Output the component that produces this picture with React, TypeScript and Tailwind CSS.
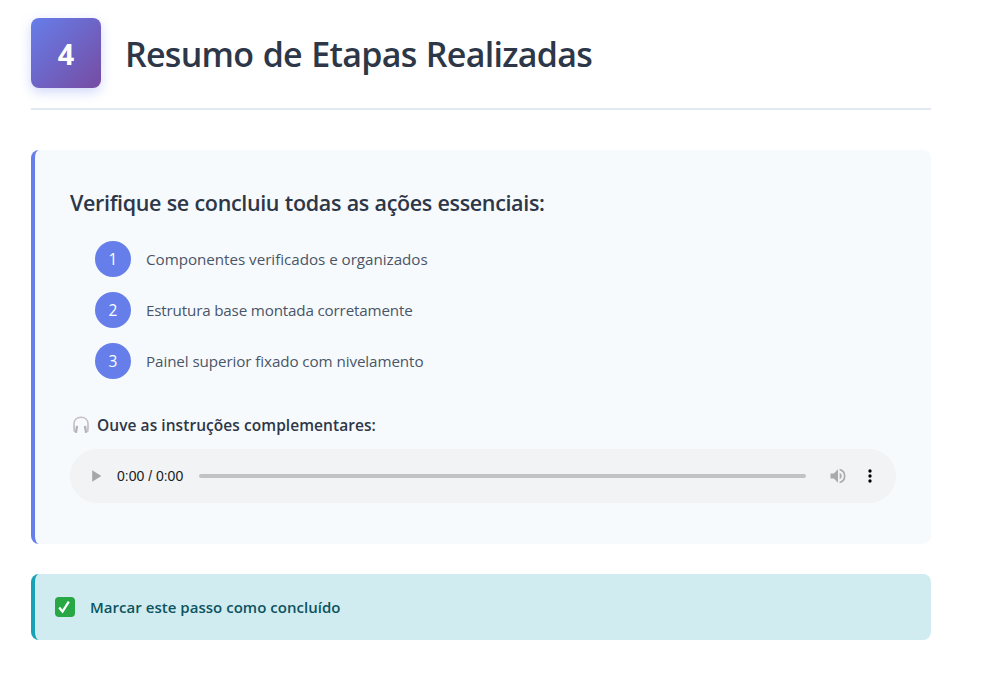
const steps = [
  { text: 'Componentes verificados e organizados', spacing: 'tracking-[-0.03px]' },
  { text: 'Estrutura base montada corretamente', spacing: 'tracking-[-0.17px]' },
  { text: 'Painel superior fixado com nivelamento', spacing: 'tracking-[-0.09px]' },
];

function Headphones() {
  return (
    <svg width="18" height="18" viewBox="0 0 18 18" fill="none">
      <path d="M2 12.5V7.7C2 3.8 4.8 1.2 9 1.2s7 2.6 7 6.5v4.8" stroke="#c5bfc8" strokeWidth="1.6" />
      <path d="M1.2 9.5v4.7c0 1 .8 2 2 2.2V9.2c-.8-.3-1.6-.3-2 .3ZM16.8 9.5v4.7c0 1-.8 2-2 2.2V9.2c.8-.3 1.6-.3 2 .3Z" fill="#c9c5cd" />
      <path d="M5 10.8 4 16M13 10.8l1 5.2" stroke="#b5afba" strokeWidth="2.2" strokeLinecap="round" />
    </svg>
  );
}

function AudioPlayer() {
  return (
    <div className="flex h-[54px] w-[826px] items-center rounded-full bg-[#f1f3f4]">
      <svg className="ml-[17px]" width="20" height="20" viewBox="0 0 24 24" fill="#a5a6a7">
        <path d="M6.2 5v14l11-7z" />
      </svg>
      <span className="ml-[10px] w-[82px] whitespace-nowrap font-['Liberation_Sans',Arial,sans-serif] text-[14px] leading-5 text-[#202124]">
        0:00 / 0:00
      </span>
      <div className="h-1 w-[607px] rounded-full bg-[#c1c2c3]" />
      <svg className="ml-[22px]" width="20" height="20" viewBox="0 0 24 24" fill="#a9aaab">
        <path d="M3 9v6h4l5 5V4L7 9H3zm13.5 3A4.5 4.5 0 0 0 14 7.97v8.05A4.5 4.5 0 0 0 16.5 12zM14 3.23v2.06a7 7 0 0 1 0 13.42v2.06a9 9 0 0 0 0-17.54z" />
      </svg>
      <svg className="ml-3" width="20" height="20" viewBox="0 0 24 24" fill="#000">
        <path d="M12 8a2 2 0 1 0 0-4 2 2 0 0 0 0 4zm0 2a2 2 0 1 0 0 4 2 2 0 0 0 0-4zm0 6a2 2 0 1 0 0 4 2 2 0 0 0 0-4z" />
      </svg>
    </div>
  );
}

export default function App() {
  return (
    <main className="h-[684px] bg-white pl-[31px] pt-[18px] font-['Open_Sans','Noto_Sans',sans-serif]">
      <div className="w-[900px]">
        <header className="flex h-[92px] items-start gap-6 border-b-2 border-[#e2e8f0]">
          <div className="flex size-[70px] items-center justify-center rounded-lg bg-[linear-gradient(135deg,#667eea_0%,#764ba2_100%)] pt-0.5 text-[28.8px] font-bold text-white shadow-[0_4px_12px_rgba(102,126,234,0.3)]">
            4
          </div>
          <h1 className="whitespace-nowrap pt-px text-[34px] font-semibold leading-[70px] tracking-[-0.72px] text-[#2d3748] [word-spacing:1.2px]">
            Resumo de Etapas Realizadas
          </h1>
        </header>

        <section className="mt-10 h-[394px] rounded-lg border-l-4 border-[#667eea] bg-[#f7fafc] pl-[35px] pt-[36px]">
          <h2 className="whitespace-nowrap text-[21.5px] font-semibold leading-[34px] tracking-[-0.35px] text-[#2d3748] [word-spacing:0.4px]">
            Verifique se concluiu todas as ações essenciais:
          </h2>
          <ol className="mt-[21px] flex flex-col gap-[15px] pl-[25px]">
            {steps.map((step, i) => (
              <li key={step.text} className="flex h-9 items-center gap-[15px]">
                <span className="flex size-9 items-center justify-center rounded-full bg-[#667eea] pt-0.5 text-[15.5px] text-white">{i + 1}</span>
                <span className={`whitespace-nowrap text-[15.2px] text-[#4a5568] ${step.spacing}`}>{step.text}</span>
              </li>
            ))}
          </ol>
          <p className="mt-[34px] flex h-6 items-center text-[15.5px] font-semibold text-[#2d3748]">
            <span className="ml-0.5 mr-[7px] block"><Headphones /></span>
            <span className="whitespace-nowrap pt-0.5 tracking-[0.06px]">Ouve as instruções complementares:</span>
          </p>
          <div className="mt-3"><AudioPlayer /></div>
        </section>

        <section className="mt-[30px] flex h-[66px] items-center rounded-lg border-l-4 border-[#17a2b8] bg-[#d1ecf1] pl-5">
          <div className="flex size-5 items-center justify-center rounded-[4px] bg-[#28a745]">
            <svg width="14" height="14" viewBox="0 0 14 14" fill="none">
              <path d="M1.2 7.6 4.5 11.5 10.8 1.6" stroke="#fff" strokeWidth="2.3" />
            </svg>
          </div>
          <span className="ml-[15px] whitespace-nowrap text-[15px] font-semibold tracking-[0.03px] text-[#0c5460]">Marcar este passo como concluído</span>
        </section>
      </div>
    </main>
  );
}
